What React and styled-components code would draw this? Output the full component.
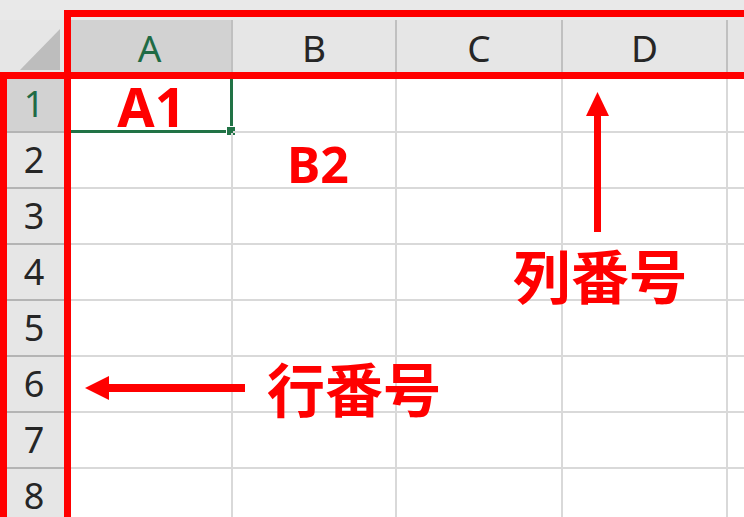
import React from "react";
import styled, { createGlobalStyle } from "styled-components";

const Global = createGlobalStyle`
  html, body {
    margin: 0;
    padding: 0;
    background: #ffffff;
    overflow: hidden;
  }
  #root {
    width: 744px;
    height: 517px;
  }
`;

const COLS = [
  { key: "A", label: "A" },
  { key: "B", label: "B" },
  { key: "C", label: "C" },
  { key: "D", label: "D" },
  { key: "E", label: "" },
];
const ROWS = [1, 2, 3, 4, 5, 6, 7, 8];

const Stage = styled.div`
  position: relative;
  width: 744px;
  height: 517px;
  overflow: hidden;
  font-family: "Noto Sans", "Open Sans", sans-serif;
`;

const Sheet = styled.div`
  display: grid;
  grid-template-columns: 68px 165px 164px 166px 165px 120px;
  grid-template-rows: 20px 57px repeat(8, 56px);
  background: #ffffff;
`;

const TopStrip = styled.div`
  grid-column: 1 / -1;
  background: #e9e9e9;
`;

const Corner = styled.div`
  display: flex;
  align-items: flex-end;
  justify-content: flex-end;
  padding: 0 6px 5px 0;
  background: #e6e6e6;
  border-right: 2px solid #c4c4c4;
  border-bottom: 2px solid #b8b8b8;
  box-sizing: border-box;
`;

const CornerTriangle = styled.div`
  width: 40px;
  height: 41px;
  background: #bdbdbd;
  clip-path: polygon(100% 0, 100% 100%, 0 100%);
`;

const ColHead = styled.div`
  display: flex;
  align-items: center;
  justify-content: center;
  box-sizing: border-box;
  background: ${(p) => (p.$active ? "#d2d2d2" : "#e6e6e6")};
  border-right: 2px solid #c0c0c0;
  border-bottom: 2px solid ${(p) => (p.$active ? "#217346" : "#b8b8b8")};
  color: ${(p) => (p.$active ? "#1f6b45" : "#262626")};
  font-size: 37px;
  font-weight: 400;
  line-height: 1;
`;

const RowHead = styled.div`
  display: flex;
  align-items: center;
  justify-content: center;
  box-sizing: border-box;
  background: ${(p) => (p.$active ? "#d2d2d2" : "#e6e6e6")};
  border-right: 2px solid ${(p) => (p.$active ? "#217346" : "#c0c0c0")};
  border-bottom: 2px solid #b4b4b4;
  color: ${(p) => (p.$active ? "#1f6b45" : "#262626")};
  font-size: 36px;
  line-height: 1;
  padding-left: 2px;
`;

const Cell = styled.div`
  position: relative;
  display: flex;
  align-items: center;
  justify-content: center;
  box-sizing: border-box;
  padding: ${(p) => p.$pad || "0"};
  border-right: 2px solid #d9d9d9;
  border-bottom: 2px solid #d9d9d9;
`;

const CellLabel = styled.span`
  font-family: "Noto Sans", "Liberation Sans", sans-serif;
  font-weight: 700;
  font-size: ${(p) => p.$size}px;
  color: #ff0000;
  line-height: 1;
`;

const Selection = styled.div`
  position: absolute;
  inset: -2px;
  border-right: 3px solid #217346;
  border-bottom: 3px solid #217346;
  pointer-events: none;
`;

const FillHandle = styled.div`
  position: absolute;
  right: -6px;
  bottom: -6px;
  width: 8px;
  height: 8px;
  background: #217346;
  border: 1px solid #ffffff;
`;

const Frame = styled.div`
  position: absolute;
  left: ${(p) => p.$x}px;
  top: ${(p) => p.$y}px;
  width: ${(p) => p.$w}px;
  height: ${(p) => p.$h}px;
  border: 7px solid #ff0000;
  box-sizing: border-box;
  pointer-events: none;
`;

const Callout = styled.div`
  position: absolute;
  left: ${(p) => p.$x}px;
  top: ${(p) => p.$y}px;
  font-family: "Noto Sans CJK JP", "Noto Sans CJK SC", sans-serif;
  font-weight: 700;
  font-size: 58px;
  line-height: 1;
  color: #ff0000;
  white-space: nowrap;
`;

const ArrowSvg = styled.svg`
  position: absolute;
  left: 0;
  top: 0;
  pointer-events: none;
`;

const cellLabels = {
  A1: { text: "A1", size: 54, pad: "4px 0 0 4px" },
  B2: { text: "B2", size: 50, pad: "8px 0 0 8px" },
};

export default function App() {
  return (
    <Stage>
      <Global />
      <Sheet>
        <TopStrip />
        <Corner>
          <CornerTriangle />
        </Corner>
        {COLS.map((c) => (
          <ColHead key={c.key} $active={c.key === "A"}>
            {c.label}
          </ColHead>
        ))}
        {ROWS.map((r) => (
          <React.Fragment key={r}>
            <RowHead $active={r === 1}>{r}</RowHead>
            {COLS.map((c) => {
              const id = `${c.key}${r}`;
              const label = cellLabels[id];
              return (
                <Cell key={id} $pad={label && label.pad}>
                  {label && <CellLabel $size={label.size}>{label.text}</CellLabel>}
                  {id === "A1" && (
                    <Selection>
                      <FillHandle />
                    </Selection>
                  )}
                </Cell>
              );
            })}
          </React.Fragment>
        ))}
      </Sheet>

      {/* column-number and row-number callout frames */}
      <Frame $x={64} $y={10} $w={720} $h={69} />
      <Frame $x={0} $y={72} $w={71} $h={480} />

      <ArrowSvg width="744" height="517" viewBox="0 0 744 517">
        <rect x="594" y="112" width="7" height="120" fill="#ff0000" />
        <polygon points="597.5,92 609,116 586,116" fill="#ff0000" />
        <rect x="106" y="384" width="139" height="8" fill="#ff0000" />
        <polygon points="85,388 109,376 109,400" fill="#ff0000" />
      </ArrowSvg>

      <Callout $x={513} $y={245}>列番号</Callout>
      <Callout $x={267} $y={358}>行番号</Callout>
    </Stage>
  );
}
